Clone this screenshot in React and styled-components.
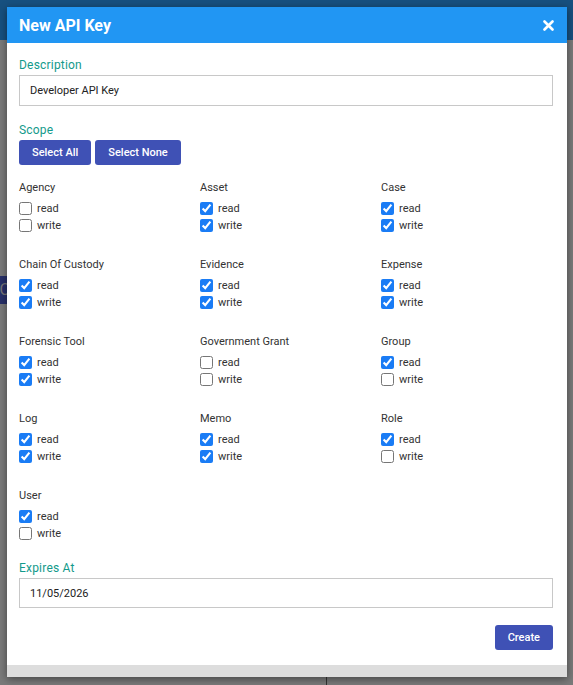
import React from "react";
import styled, { createGlobalStyle } from "styled-components";

const scopes = [
  { name: "Agency", read: false, write: false },
  { name: "Asset", read: true, write: true },
  { name: "Case", read: true, write: true },
  { name: "Chain Of Custody", read: true, write: true },
  { name: "Evidence", read: true, write: true },
  { name: "Expense", read: true, write: true },
  { name: "Forensic Tool", read: true, write: true },
  { name: "Government Grant", read: false, write: false },
  { name: "Group", read: true, write: false },
  { name: "Log", read: true, write: true },
  { name: "Memo", read: true, write: true },
  { name: "Role", read: true, write: false },
  { name: "User", read: true, write: false },
];

const GlobalStyle = createGlobalStyle`
  html, body {
    margin: 0;
    padding: 0;
    height: 100%;
    background: #7a7a7a;
    font-family: Roboto, "Liberation Sans", sans-serif;
  }
`;

const App = () => {
  const [perms, setPerms] = React.useState(scopes);

  const toggle = (i, key) => {
    setPerms((p) =>
      p.map((s, idx) => (idx === i ? { ...s, [key]: !s[key] } : s))
    );
  };

  const setAll = (val) => {
    setPerms((p) => p.map((s) => ({ ...s, read: val, write: val })));
  };

  return (
    <Page>
      <GlobalStyle />
      <NavBar />
      <BehindButton>C</BehindButton>
      <BehindLine />
      <Modal>
        <Header>
          <Title>New API Key</Title>
          <Close aria-label="close">
            <svg width="11" height="11" viewBox="0 0 11 11">
              <path
                d="M1.5 1.5 L9.5 9.5 M9.5 1.5 L1.5 9.5"
                stroke="#fff"
                strokeWidth="2.6"
                strokeLinecap="round"
              />
            </svg>
          </Close>
        </Header>
        <Body>
          <Label>Description</Label>
          <Input defaultValue="Developer API Key" />

          <Label $top={16}>Scope</Label>
          <ButtonRow>
            <Button onClick={() => setAll(true)}>Select All</Button>
            <Button onClick={() => setAll(false)}>Select None</Button>
          </ButtonRow>

          <ScopeGrid>
            {perms.map((s, i) => (
              <Group key={s.name}>
                <GroupTitle>{s.name}</GroupTitle>
                <CheckRow>
                  <Check
                    type="checkbox"
                    checked={s.read}
                    onChange={() => toggle(i, "read")}
                  />
                  read
                </CheckRow>
                <CheckRow>
                  <Check
                    type="checkbox"
                    checked={s.write}
                    onChange={() => toggle(i, "write")}
                  />
                  write
                </CheckRow>
              </Group>
            ))}
          </ScopeGrid>

          <Label $top={18}>Expires At</Label>
          <Input defaultValue="11/05/2026" $height={30} />

          <Actions>
            <Button>Create</Button>
          </Actions>
        </Body>
        <Footer />
      </Modal>
    </Page>
  );
};

export default App;

const Page = styled.div`
  position: relative;
  width: 573px;
  height: 685px;
  overflow: hidden;
  background: #7a7a7a;
`;

const NavBar = styled.div`
  height: 40px;
  background: #17507f;
`;

const BehindButton = styled.div`
  position: absolute;
  left: -20px;
  top: 276px;
  width: 30px;
  height: 28px;
  background: #283069;
  color: #777;
  font-size: 16px;
  line-height: 28px;
  text-align: right;
  border-radius: 3px;
`;

const BehindLine = styled.div`
  position: absolute;
  left: 326px;
  top: 670px;
  width: 1px;
  height: 20px;
  background: #333;
`;

const Modal = styled.div`
  position: absolute;
  left: 7px;
  top: 7px;
  width: 560px;
  background: #fff;
  box-shadow: 0 2px 8px rgba(0, 0, 0, 0.45);
  display: flex;
  flex-direction: column;
`;

const Header = styled.div`
  height: 36px;
  background: #2196f3;
  display: flex;
  align-items: center;
  justify-content: space-between;
  padding: 0 13px 0 12px;
`;

const Title = styled.h2`
  margin: 0;
  color: #fff;
  font-size: 16px;
  font-weight: 700;
`;

const Close = styled.button`
  border: none;
  background: none;
  padding: 0;
  display: flex;
  cursor: pointer;
`;

const Body = styled.div`
  padding: 14px 14px 15px 12px;
`;

const Label = styled.div`
  color: #139a8b;
  font-size: 12px;
  font-weight: 400;
  letter-spacing: 0.2px;
  line-height: 16px;
  margin-top: ${(p) => p.$top || 0}px;
`;

const Input = styled.input`
  display: block;
  box-sizing: border-box;
  width: 100%;
  height: ${(p) => p.$height || 31}px;
  margin-top: 2px;
  border: 1px solid #c8c8c8;
  padding: 0 10px;
  font-family: Roboto, "Liberation Sans", sans-serif;
  font-size: 11px;
  color: #222;
  outline: none;
`;

const ButtonRow = styled.div`
  display: flex;
  gap: 4px;
  margin-top: 2px;
`;

const Button = styled.button`
  height: 25px;
  padding: 0 13px;
  border: none;
  border-radius: 3px;
  background: #3f51b5;
  color: #fff;
  font-family: Roboto, "Liberation Sans", sans-serif;
  font-size: 11px;
  font-weight: 500;
  cursor: pointer;
`;

const ScopeGrid = styled.div`
  display: grid;
  grid-template-columns: repeat(3, 181px);
  row-gap: 24px;
  margin-top: 16px;
`;

const Group = styled.div`
  display: flex;
  flex-direction: column;
`;

const GroupTitle = styled.div`
  font-size: 11px;
  line-height: 14px;
  color: #333;
  margin-bottom: 5px;
`;

const CheckRow = styled.label`
  display: flex;
  align-items: center;
  height: 17px;
  font-size: 11px;
  color: #333;
  cursor: pointer;
`;

const Check = styled.input`
  width: 13px;
  height: 13px;
  margin: 0 5px 0 0;
  accent-color: #1a7cf5;
`;

const Actions = styled.div`
  display: flex;
  justify-content: flex-end;
  margin-top: 17px;
`;

const Footer = styled.div`
  height: 12px;
  background: #dddddd;
`;
